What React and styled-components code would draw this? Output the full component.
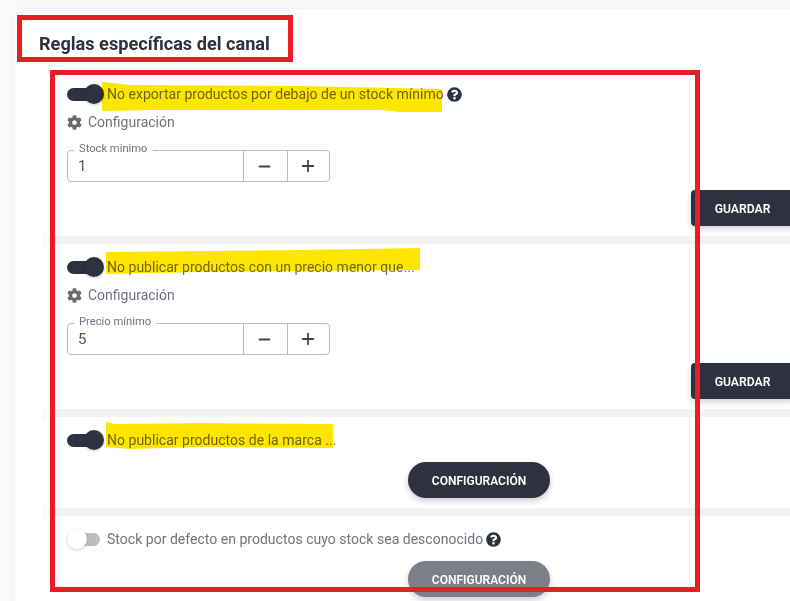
import React from 'react';
import styled, { createGlobalStyle } from 'styled-components';
import { FaCog, FaQuestionCircle } from 'react-icons/fa';
import { Minus, Plus } from 'lucide-react';

const dark = '#2e3240';
const grey = '#6f7280';

const GlobalStyle = createGlobalStyle`
  html, body {
    margin: 0;
    padding: 0;
    background: #fafafa;
    font-family: Roboto, "Liberation Sans", sans-serif;
  }
`;

const Page = styled.div`
  position: relative;
  width: 790px;
  height: 601px;
  overflow: hidden;
  padding: 9px 0 0 15px;
  box-sizing: border-box;
`;

const Card = styled.div`
  width: 800px;
  background: #ffffff;
  border-radius: 4px 0 0 4px;
  box-shadow: 0 0 14px rgba(0, 0, 0, 0.03);
`;

const Title = styled.h2`
  margin: 0;
  padding: 25px 0 0 24px;
  height: 61px;
  box-sizing: border-box;
  font-size: 18.15px;
  line-height: 20px;
  font-weight: 700;
  color: ${dark};
`;

const RuleList = styled.div`
  margin-left: 28px;
  width: 751px;
  display: flex;
  flex-direction: column;
  gap: 8px;
  background: linear-gradient(90deg, #fafafa 7px, #f2f2f2 7px);
  border-radius: 8px 0 0 8px;
`;

const Rule = styled.section`
  height: ${({ $height }) => $height}px;
  padding-top: ${({ $top }) => $top}px;
  box-sizing: border-box;
  background: #ffffff;
  border-radius: 8px 0 0 8px;
`;

const Head = styled.div`
  display: flex;
  align-items: center;
  height: 20px;
  padding-left: 24px;
  font-size: 14px;
  letter-spacing: 0.02px;
  color: ${grey};
`;

const Switch = styled.span`
  position: relative;
  flex: none;
  width: 33px;
  height: 13px;
  margin-right: 7px;
  border-radius: 7px;
  background: ${({ $on }) => ($on ? dark : '#bdbdbd')};

  &::after {
    content: '';
    position: absolute;
    top: -4px;
    left: ${({ $on }) => ($on ? '17px' : '0')};
    width: 20px;
    height: 20px;
    border-radius: 50%;
    background: ${({ $on }) => ($on ? dark : '#ffffff')};
    box-shadow: 0 1px 3px rgba(0, 0, 0, 0.2);
  }
`;

const Help = styled(FaQuestionCircle)`
  flex: none;
  margin-left: 3px;
  font-size: 15px;
  color: ${dark};
`;

const Settings = styled.div`
  display: flex;
  align-items: center;
  gap: 6px;
  height: 20px;
  margin-top: 8px;
  padding-left: 24px;
  font-size: 14px;
  color: ${grey};

  svg {
    color: #6b6b6b;
    font-size: 15px;
  }
`;

const Stepper = styled.div`
  position: relative;
  display: grid;
  grid-template-columns: 175px 44px 42px;
  width: 263px;
  height: 32px;
  margin: 18px 0 0 24px;
  box-sizing: border-box;
  border: 1px solid #bcbcbc;
  border-radius: 4px;
`;

const StepLabel = styled.label`
  position: absolute;
  top: -9px;
  left: 6px;
  padding: 0 5px;
  background: #ffffff;
  font-size: 11.2px;
  line-height: 13px;
  color: ${grey};
`;

const StepValue = styled.div`
  padding: 6px 0 0 10px;
  font-size: 15px;
  line-height: 18px;
  color: #555555;
`;

const StepButton = styled.div`
  display: flex;
  align-items: center;
  justify-content: center;
  padding-right: 2px;
  border-left: 1px solid #bcbcbc;
  color: #444444;
`;

const SaveRow = styled.div`
  display: flex;
  justify-content: flex-end;
  margin-top: 8px;
`;

const SaveButton = styled.button`
  width: 103px;
  height: 36px;
  padding: 2px 0 0;
  border: none;
  border-radius: 4px 0 0 4px;
  background: ${dark};
  color: #ffffff;
  font-family: inherit;
  font-size: 12.2px;
  font-weight: 600;
  box-shadow: 0 3px 6px rgba(0, 0, 0, 0.18);
`;

const PillButton = styled.button`
  display: block;
  width: 142px;
  height: 36px;
  margin: 12px 0 0 365px;
  padding: 2px 0 0;
  border: none;
  border-radius: 18px;
  background: ${({ $off }) => ($off ? '#7c7e88' : dark)};
  color: #ffffff;
  font-family: inherit;
  font-size: 12px;
  font-weight: 600;
  box-shadow: 0 3px 6px rgba(0, 0, 0, 0.2);
`;

// hand-drawn annotations lying over the screenshot
const RedBox = styled.div`
  position: absolute;
  left: ${({ $x }) => $x}px;
  top: ${({ $y }) => $y}px;
  width: ${({ $w }) => $w}px;
  height: ${({ $h }) => $h}px;
  box-sizing: border-box;
  border: 5px solid #ed1c24;
`;

const Marks = styled.svg`
  position: absolute;
  left: 0;
  top: 0;
  mix-blend-mode: multiply;
`;

const ConfigIcon = () => (
  <Settings>
    <FaCog />
    Configuración
  </Settings>
);

const StockStepper = ({ label, value }) => (
  <Stepper>
    <StepLabel>{label}</StepLabel>
    <StepValue>{value}</StepValue>
    <StepButton><Minus size={17} strokeWidth={2.6} /></StepButton>
    <StepButton><Plus size={18} strokeWidth={2.4} /></StepButton>
  </Stepper>
);

export default function App() {
  return (
    <Page>
      <GlobalStyle />
      <Card>
        <Title>Reglas específicas del canal</Title>
        <RuleList>
          <Rule $height={166} $top={14}>
            <Head>
              <Switch $on />
              No exportar productos por debajo de un stock mínimo
              <Help />
            </Head>
            <ConfigIcon />
            <StockStepper label="Stock minimo" value="1" />
            <SaveRow><SaveButton>GUARDAR</SaveButton></SaveRow>
          </Rule>
          <Rule $height={165} $top={13}>
            <Head>
              <Switch $on />
              No publicar productos con un precio menor que...
            </Head>
            <ConfigIcon />
            <StockStepper label="Precio mínimo" value="5" />
            <SaveRow><SaveButton>GUARDAR</SaveButton></SaveRow>
          </Rule>
          <Rule $height={91} $top={13}>
            <Head>
              <Switch $on />
              No publicar productos de la marca ...
            </Head>
            <PillButton>CONFIGURACIÓN</PillButton>
          </Rule>
          <Rule $height={91} $top={13}>
            <Head>
              <Switch />
              Stock por defecto en productos cuyo stock sea desconocido
              <Help />
            </Head>
            <PillButton $off>CONFIGURACIÓN</PillButton>
          </Rule>
        </RuleList>
      </Card>

      <Marks width="790" height="601">
        <path fill="#ffe600" d="M102 82 L130 85 L300 86 L442 89 L442 112 L400 112 L380 110 L150 110 L102 111 Z" />
        <path fill="#ffe600" d="M106 252 L300 250 L420 248 L420 270 L300 271 L200 272 L106 274 Z" />
        <path fill="#ffe600" d="M106 422 L115 424 L200 423 L333 424 L333 448 L200 447 L130 449 L106 447 Z" />
      </Marks>
      <RedBox $x={17} $y={15} $w={276} $h={47} />
      <RedBox $x={50} $y={70} $w={650} $h={522} />
    </Page>
  );
}
